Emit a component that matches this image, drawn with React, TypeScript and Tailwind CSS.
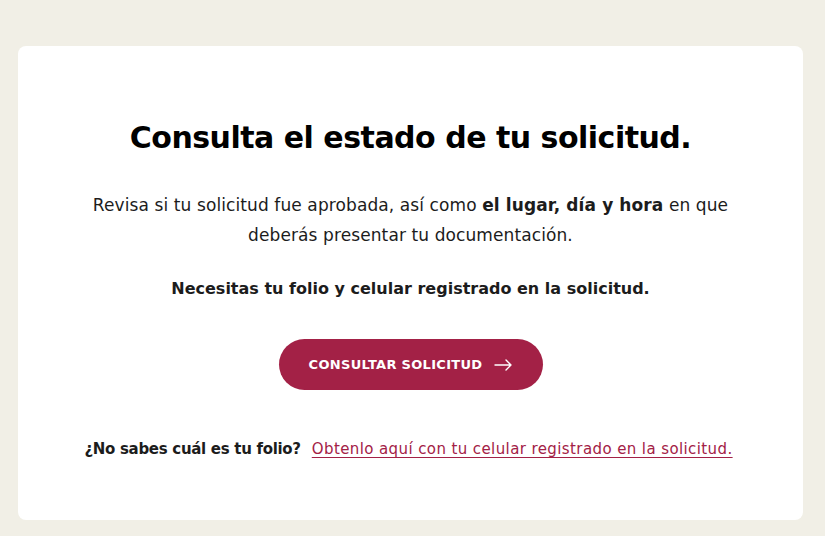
import React from "react";

export default function App() {
  return (
    <div className="min-h-[536px] w-[825px] bg-[#f1efe6] pt-[46px] pl-[18px]" style={{ fontFamily: '"DejaVu Sans", sans-serif' }}>
      <div className="w-[785px] h-[474px] bg-white rounded-[8px] flex flex-col items-center text-[#1c1c1c]">
        <h1 className="mt-[72px] text-[30px] leading-[40px] font-bold tracking-[-0.5px] text-black">Consulta el estado de tu solicitud.</h1>
        <p className="mt-[32px] text-[17px] leading-[30px] text-center w-[660px] tracking-[0.1px]">
          Revisa si tu solicitud fue aprobada, así como <b>el lugar, día y hora</b> en que deberás presentar tu documentación.
        </p>
        <p className="mt-[24px] text-[16px] leading-[30px] font-bold">Necesitas tu folio y celular registrado en la solicitud.</p>
        <button className="mt-[35px] w-[264px] h-[51px] rounded-full bg-[#a32146] text-white text-[13px] font-bold tracking-[0.3px] flex items-center justify-center gap-[12px]">
          CONSULTAR SOLICITUD
          <svg width="18" height="12" viewBox="0 0 18 12" fill="none" stroke="white" strokeWidth="1.4" strokeLinecap="round" strokeLinejoin="round">
            <path d="M1 6h16M12 1l5 5-5 5" />
          </svg>
        </button>
        <div className="mt-[48px] text-[15px] leading-[22px] flex gap-[11px] ml-[-4px]">
          <span className="font-bold tracking-[-0.3px]">¿No sabes cuál es tu folio?</span>
          <a className="text-[#a32146] underline underline-offset-[3px] tracking-[0.4px]" href="#">Obtenlo aquí con tu celular registrado en la solicitud.</a>
        </div>
      </div>
    </div>
  );
}
